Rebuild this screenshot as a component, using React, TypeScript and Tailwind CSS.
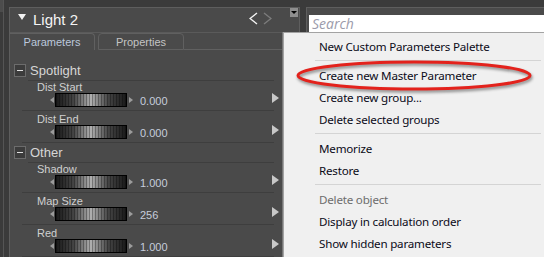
import React from 'react'

type Param = { label: string; value: string }

const spotlight: Param[] = [
  { label: 'Dist Start', value: '0.000' },
  { label: 'Dist End', value: '0.000' },
]

const other: Param[] = [
  { label: 'Shadow', value: '1.000' },
  { label: 'Map Size', value: '256' },
  { label: 'Red', value: '1.000' },
]

type MenuEntry = { text: string; disabled?: boolean } | 'sep'

const menu: MenuEntry[] = [
  { text: 'New Custom Parameters Palette' },
  'sep',
  { text: 'Create new Master Parameter' },
  { text: 'Create new group...' },
  { text: 'Delete selected groups' },
  'sep',
  { text: 'Memorize' },
  { text: 'Restore' },
  'sep',
  { text: 'Delete object', disabled: true },
  { text: 'Display in calculation order' },
  { text: 'Show hidden parameters' },
]

export default function App() {
  return (
    <div className="relative flex w-[544px] h-[257px] overflow-hidden bg-[#3b3b3b] font-['Liberation_Sans',Arial,sans-serif]">
      {/* left gutter */}
      <div className="w-[9px] shrink-0 flex">
        <div className="w-[3px] h-[12px] bg-[#4c4c4c]" />
        <div className="w-px bg-[#555555]" />
      </div>

      {/* parameters panel */}
      <div className="mt-[7px] w-[291px] shrink-0 flex flex-col border-l border-t border-r border-[#5e5e5e] bg-[#4a4a4a]">
        <Header />
        <Tabs />
        <div className="pt-[11px]">
          <GroupHeader title="Spotlight" />
          {spotlight.map((p, i) => (
            <ParamRow key={p.label} {...p} first={i === 0} />
          ))}
          <GroupHeader title="Other" />
          {other.map((p, i) => (
            <ParamRow key={p.label} {...p} first={i === 0} />
          ))}
        </div>
      </div>

      {/* search panel */}
      <div className="ml-[6px] mt-[7px] flex-1 border-l border-t border-[#5e5e5e] bg-[#4a4a4a] pl-[2px] pt-[7px]">
        <div className="h-[18px] bg-white pl-[3px] text-[14px] leading-[18px] italic text-[#9b9bab] font-['Open_Sans',sans-serif]">
          Search
        </div>
      </div>

      <ContextMenu />

      {/* annotation */}
      <svg
        className="absolute left-[293px] top-[58px] drop-shadow-[1px_2px_1.5px_rgba(0,0,0,0.45)]"
        width="242"
        height="38"
        viewBox="0 0 242 38"
      >
        <ellipse cx="121" cy="17.5" rx="116" ry="13.5" fill="none" stroke="#e3221c" strokeWidth="3" />
      </svg>
    </div>
  )
}

function Header() {
  return (
    <div className="h-[25px] shrink-0 flex items-start border-b border-[#5a5a5a]">
      <div className="ml-[8px] mt-[6px] w-0 h-0 border-x-[4.5px] border-x-transparent border-t-[6px] border-t-[#f2f2f2]" />
      <span className="ml-[7px] mt-[3px] text-[15px] leading-[17px] text-[#f4f4f4]">Light 2</span>
      <div className="ml-auto mt-[4px] flex gap-[5px]">
        <svg width="9" height="13" viewBox="0 0 9 13">
          <polyline points="8,1 1,6.5 8,12" fill="none" stroke="#f4f4f4" strokeWidth="1.4" />
        </svg>
        <svg width="9" height="13" viewBox="0 0 9 13">
          <polyline points="1,1 8,6.5 1,12" fill="none" stroke="#7c7c7c" strokeWidth="1.4" />
        </svg>
      </div>
      <div className="ml-[18px] mr-[1px] w-[8px] h-[9px] bg-[#8e8e8e] flex items-center justify-center">
        <div className="w-0 h-0 border-x-[3px] border-x-transparent border-t-[3px] border-t-black" />
      </div>
    </div>
  )
}

function Tabs() {
  return (
    <div className="h-[17px] shrink-0 flex items-end">
      <div className="w-[85px] h-[17px] rounded-tr-[4px] border-t border-r border-[#606060] text-center text-[11px] leading-[16px] text-[#bcc8dc]">
        Parameters
      </div>
      <div className="ml-[3px] w-[86px] h-[17px] rounded-t-[4px] border border-[#606060] text-center text-[11px] leading-[16px] text-[#c4c4c4]">
        Properties
      </div>
      <div className="flex-1 border-b border-[#606060]" />
    </div>
  )
}

function GroupHeader({ title }: { title: string }) {
  return (
    <div className="h-[20px] flex flex-col">
      <div className="flex items-start pt-[3px] pl-[4px] h-[19px]">
        <div className="w-[12px] h-[13px] border border-[#6c6c6c] bg-[#3c3c3c] flex items-center justify-center">
          <div className="w-[6px] h-px bg-[#e0e0e0]" />
        </div>
        <span className="ml-[4px] text-[13px] leading-[13px] text-[#d6d6d6]">{title}</span>
      </div>
      <div className="ml-[18px] w-[246px] h-px bg-[#3e3e3e]" />
    </div>
  )
}

function ParamRow({ label, value, first }: Param & { first: boolean }) {
  return (
    <div
      className={`ml-[12px] w-[252px] border-b border-[#3e3e3e] ${
        first ? 'h-[30px] pt-[1px]' : 'h-[32px] pt-[3px]'
      }`}
    >
      <div className="pl-[15px] h-[11px] text-[11px] leading-[11px] text-[#d0d0d0]">{label}</div>
      <div className="flex items-start h-[14px]">
        <div className="ml-[28px] mt-[4px] w-0 h-0 border-y-[3px] border-y-transparent border-r-[4px] border-r-[#9c9c9c]" />
        <div className="relative ml-[1px] w-[72px] h-[14px] border border-black bg-[linear-gradient(90deg,#1a1a1a,#444_25%,#b0b0b0_50%,#444_75%,#1a1a1a)]">
          <div className="absolute inset-0 bg-[repeating-linear-gradient(90deg,rgba(0,0,0,0.3)_0_1px,transparent_1px_3px)]" />
        </div>
        <div className="ml-[2px] mt-[4px] w-0 h-0 border-y-[3px] border-y-transparent border-l-[4px] border-l-[#9c9c9c]" />
        <span className="ml-[7px] mt-[2px] text-[11px] leading-[12px] text-[#c6cddc]">{value}</span>
        <div className="ml-auto mr-[-5px] w-0 h-0 border-y-[5px] border-y-transparent border-l-[7px] border-l-[#c8c8c8]" />
      </div>
    </div>
  )
}

function ContextMenu() {
  return (
    <div className="absolute left-[283px] top-[32px] w-[262px] h-[232px] border-l border-t border-[#a3a3a3] bg-[#f0f0f0] pt-[2px] shadow-[-1px_0_0_#777] font-['Noto_Sans',sans-serif] text-[11.6px] tracking-[-0.2px]">
      {menu.map((m, i) =>
        m === 'sep' ? (
          <div key={i} className="h-[7px] pt-[3px] ml-[31px] mr-[4px]">
            <div className="h-px bg-[#d4d4d4]" />
          </div>
        ) : (
          <div
            key={i}
            className={`h-[22px] pl-[35px] leading-[23px] ${m.disabled ? 'text-[#6d6d6d]' : 'text-[#0b0b18]'}`}
          >
            {m.text}
          </div>
        )
      )}
    </div>
  )
}
